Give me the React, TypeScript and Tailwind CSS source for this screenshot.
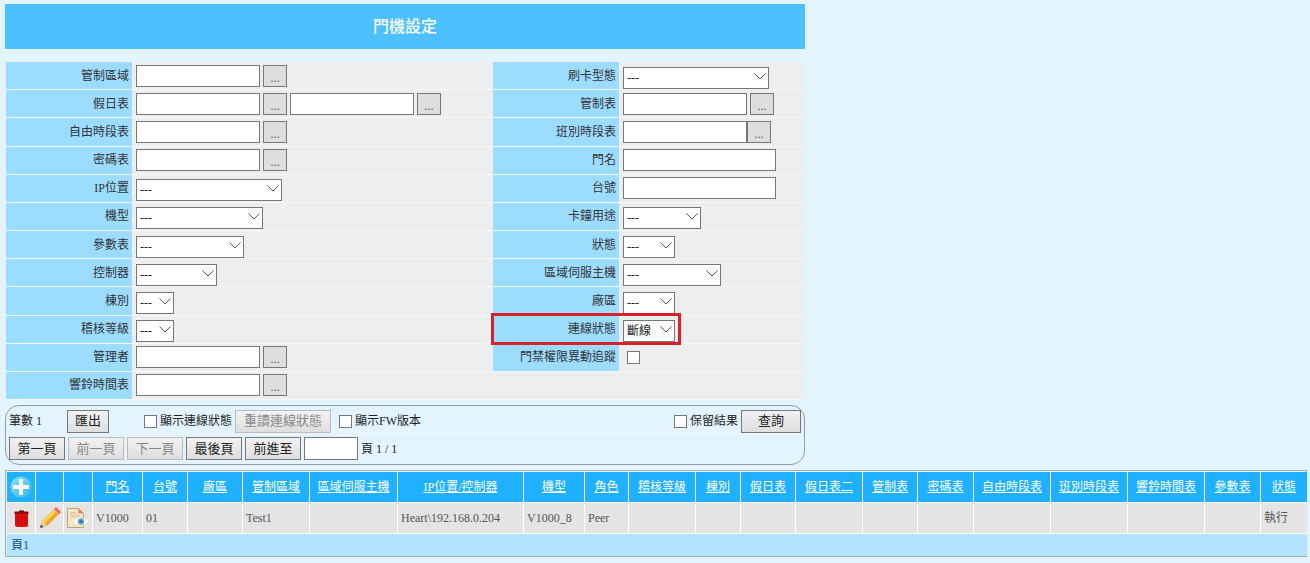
const font = "font-['Liberation_Serif','Noto_Sans_CJK_TC',serif]";

function Lookup({ flush }: { flush?: boolean }) {
  return (
    <button className={`h-[22px] w-[24px] ${flush ? "" : "ml-[3px]"} border border-[#777] bg-[#dedede] text-[12px] leading-[24px] text-[#555]`}>
      ...
    </button>
  );
}

function TextBox({ w = "w-[124px]" }: { w?: string }) {
  return <input className={`h-[22px] ${w} border border-[#767676] bg-white`} />;
}

function Select({ w, value = "---" }: { w: string; value?: string }) {
  return (
    <div className={`relative h-[22px] ${w}`}>
      <select defaultValue={value} className="appearance-none w-full h-full border border-[#767676] bg-white text-[12px] pl-[3px] text-[#222] rounded-none">
        <option>{value}</option>
      </select>
      <svg width="12" height="7" viewBox="0 0 12 7" className="absolute right-[3px] top-[8px] pointer-events-none">
        <path d="M0.5 0.5L6 6L11.500 0.500" fill="none" stroke="#555" strokeWidth="1" />
      </svg>
    </div>
  );
}

function Row({ label, children }: { label: string; children?: React.ReactNode }) {
  return (
    <div className="flex-1 flex border-b border-[#f4f8fa] min-h-0">
      <div className={`${label ? "bg-[#9cdcff]" : ""} w-[126px] shrink-0 flex items-center justify-end pr-[3px] text-[12px] text-[#333]`}>
        {label}
      </div>
      <div className="flex-1 flex items-center pl-[4px]">{children}</div>
    </div>
  );
}

function Btn({ children, disabled, w }: { children: React.ReactNode; disabled?: boolean; w: string }) {
  return (
    <button
      className={`${w} h-[23px] shrink-0 border text-[13px] bg-linear-to-b from-[#f2f2f2] to-[#dedede] ${disabled ? "border-[#bbb] text-[#888]" : "border-[#777] text-[#222]"}`}
    >
      {children}
    </button>
  );
}

function Check({ className = "" }: { className?: string }) {
  return <input type="checkbox" className={`appearance-none w-[13px] h-[13px] border border-[#767676] bg-white shrink-0 ${className}`} />;
}

function PlusIcon() {
  return (
    <svg width="22" height="22" viewBox="0 0 22 22" className="mx-auto">
      <defs>
        <linearGradient id="plusFill" x1="0" y1="0" x2="1" y2="1">
          <stop offset="0" stopColor="#8fe3f2" />
          <stop offset="1" stopColor="#2fb4e6" />
        </linearGradient>
      </defs>
      <circle cx="11" cy="11" r="10.500" fill="url(#plusFill)" />
      <path d="M9 3h4v6h6v4h-6v6H9v-6H3V9h6z" fill="#fff" />
    </svg>
  );
}

function TrashIcon() {
  return (
    <svg width="15" height="18" viewBox="0 0 15 18" className="mx-auto">
      <path d="M5 1.500h5v1.500H5z" fill="#5c0808" />
      <rect x="0.500" y="2.500" width="14" height="3" rx="1" fill="#8f0a0a" />
      <path d="M1 5h13v11a2 2 0 0 1-2 2H3a2 2 0 0 1-2-2z" fill="#e30b0b" />
      <path d="M4 7v9M7.500 7v9M11 7v9" stroke="#b30808" strokeWidth="1" />
    </svg>
  );
}

function PencilIcon() {
  return (
    <svg width="22" height="22" viewBox="0 0 22 22" className="mx-auto">
      <path d="M1 21l2-7L15 2l5 5L8 19z" fill="#f0a828" />
      <path d="M3 14L15 2l2.500 2.500L5 17z" fill="#fbd05a" />
      <path d="M15 2l2-2 5 5-2 2z" fill="#e8685c" />
      <path d="M1 21l2-7 5 5z" fill="#e9d3a6" />
      <path d="M1 21l1-3.500 2.500 2.500z" fill="#444" />
    </svg>
  );
}

function ViewIcon() {
  return (
    <svg width="22" height="20" viewBox="0 0 22 20" className="mx-auto">
      <path d="M0.500 0.500h11l5 5v14h-16z" fill="#f3e6c4" stroke="#b8a678" strokeWidth="1" />
      <path d="M11.500 0.500v5h5z" fill="#e8775f" />
      <path d="M3 5h6M3 8h10" stroke="#c9b88f" strokeWidth="1" />
      <path d="M6 13.500C9 8.500 18 8.500 22 13.500 18 18.500 9 18.500 6 13.500z" fill="#fff" stroke="#d5dde0" strokeWidth="0.500" />
      <circle cx="14" cy="13.500" r="3.200" fill="#5aa6cc" />
      <circle cx="14" cy="13.500" r="1.300" fill="#2a6a90" />
    </svg>
  );
}

const columns: [string, string][] = [
  ["門名", "w-[50px]"],
  ["台號", "w-[45px]"],
  ["廠區", "w-[55px]"],
  ["管制區域", "w-[67px]"],
  ["區域伺服主機", "w-[88px]"],
  ["IP位置/控制器", "w-[126px]"],
  ["機型", "w-[61px]"],
  ["角色", "w-[44px]"],
  ["稽核等級", "w-[67px]"],
  ["棟別", "w-[45px]"],
  ["假日表", "w-[55px]"],
  ["假日表二", "w-[67px]"],
  ["管制表", "w-[55px]"],
  ["密碼表", "w-[56px]"],
  ["自由時段表", "w-[77px]"],
  ["班別時段表", "w-[77px]"],
  ["響鈴時間表", "w-[77px]"],
  ["參數表", "w-[56px]"],
  ["狀態", "w-[46px]"],
];

const values = ["V1000", "01", "", "Test1", "", "Heart\\192.168.0.204", "V1000_8", "Peer", "", "", "", "", "", "", "", "", "", "", "執行"];

export default function App() {
  return (
    <div className={`${font} relative w-[1310px] h-[563px] overflow-hidden bg-[#e3f4ff] pt-[4px] pl-[5px]`}>
      <div className="w-[800px] h-[45px] bg-[#4dc0ff] flex items-center justify-center text-white text-[16px] font-medium">
        門機設定
      </div>

      <div className="relative mt-[13px] ml-[1px] w-[798px] h-[338px] bg-[#eeeeee] flex">
        <div className="w-[487px] flex flex-col">
          <Row label="管制區域"><TextBox /><Lookup /></Row>
          <Row label="假日表"><TextBox /><Lookup /><span className="w-[3px]" /><TextBox /><Lookup /></Row>
          <Row label="自由時段表"><TextBox /><Lookup /></Row>
          <Row label="密碼表"><TextBox /><Lookup /></Row>
          <Row label="IP位置"><Select w="w-[146px]" /></Row>
          <Row label="機型"><Select w="w-[127px]" /></Row>
          <Row label="參數表"><Select w="w-[108px]" /></Row>
          <Row label="控制器"><Select w="w-[81px]" /></Row>
          <Row label="棟別"><Select w="w-[38px]" /></Row>
          <Row label="稽核等級"><Select w="w-[38px]" /></Row>
          <Row label="管理者"><TextBox /><Lookup /></Row>
          <Row label="響鈴時間表"><TextBox /><Lookup /></Row>
        </div>
        <div className="flex-1 flex flex-col">
          <Row label="刷卡型態"><Select w="w-[146px]" /></Row>
          <Row label="管制表"><TextBox /><Lookup /></Row>
          <Row label="班別時段表"><TextBox /><Lookup flush /></Row>
          <Row label="門名"><TextBox w="w-[153px]" /></Row>
          <Row label="台號"><TextBox w="w-[153px]" /></Row>
          <Row label="卡鐘用途"><Select w="w-[78px]" /></Row>
          <Row label="狀態"><Select w="w-[52px]" /></Row>
          <Row label="區域伺服主機"><Select w="w-[98px]" /></Row>
          <Row label="廠區"><Select w="w-[52px]" /></Row>
          <Row label="連線狀態"><Select w="w-[52px]" value="斷線" /></Row>
          <Row label="門禁權限異動追蹤"><Check className="ml-[4px]" /></Row>
          <Row label="" />
        </div>
        <div className="absolute left-[485px] top-[251px] w-[190px] h-[32px] border-[3px] border-[#d9212c]" />
      </div>

      <div className="mt-[5px] w-[800px] h-[60px] border border-[#999] rounded-[14px] flex flex-col px-[3px] pt-[3px]">
        <div className="h-[25px] flex items-center text-[12px] text-[#222] border-b border-[#edf5fa] -mx-[3px] px-[3px]">
          <span className="w-[58px]">筆數 1</span>
          <Btn w="w-[42px]">匯出</Btn>
          <Check className="ml-[35px] mr-[3px]" />
          <span className="w-[75px]">顯示連線狀態</span>
          <Btn disabled w="w-[96px]">重讀連線狀態</Btn>
          <Check className="ml-[8px] mr-[3px]" />
          <span>顯示FW版本</span>
          <Check className="ml-auto mr-[3px]" />
          <span className="w-[51px]">保留結果</span>
          <Btn w="w-[60px]">查詢</Btn>
        </div>
        <div className="mt-[3px] flex items-center gap-[3px] text-[12px] text-[#222]">
          <Btn w="w-[56px]">第一頁</Btn>
          <Btn disabled w="w-[56px]">前一頁</Btn>
          <Btn disabled w="w-[56px]">下一頁</Btn>
          <Btn w="w-[56px]">最後頁</Btn>
          <Btn w="w-[56px]">前進至</Btn>
          <input className="w-[54px] h-[23px] border border-[#767676] bg-white" />
          <span>頁 1 / 1</span>
        </div>
      </div>

      <div className="mt-[5px] w-[1302px] border border-[#aaa] pt-px px-px">
        <table className="w-full table-fixed border-separate border-spacing-0 text-[12px]">
          <thead>
            <tr className="h-[31px] bg-[#1fb0ff] text-white font-normal">
              <th className="w-[29px] border-r border-b border-white"><PlusIcon /></th>
              <th className="w-[28px] border-r border-b border-white" />
              <th className="w-[29px] border-r border-b border-white" />
              {columns.map(([name, w]) => (
                <th key={name} className={`${w} font-normal border-r border-b border-white last:border-r-0`}>
                  <a className="underline">{name}</a>
                </th>
              ))}
            </tr>
          </thead>
          <tbody>
            <tr className="h-[31px] bg-[#e4e4e4] text-[#555]">
              <td className="border-r border-b border-white"><TrashIcon /></td>
              <td className="border-r border-b border-white"><PencilIcon /></td>
              <td className="border-r border-b border-white"><ViewIcon /></td>
              {values.map((v, i) => (
                <td key={i} className="px-[3px] border-r border-b border-white last:border-r-0 whitespace-nowrap overflow-hidden">
                  {v}
                </td>
              ))}
            </tr>
            <tr className="h-[22px] bg-[#b0e4ff]">
              <td colSpan={22} className="px-[4px] text-[#1a4a8a]">頁1</td>
            </tr>
          </tbody>
        </table>
      </div>
    </div>
  );
}
